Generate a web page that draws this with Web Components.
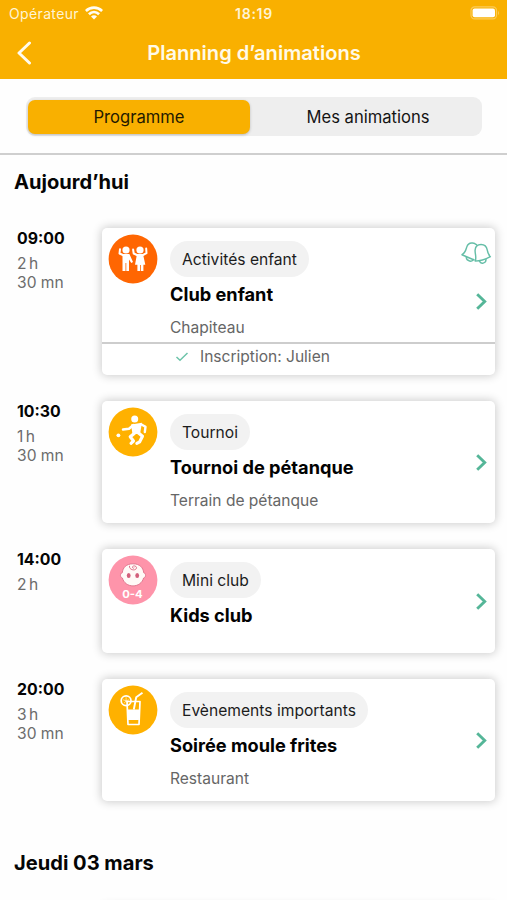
<!DOCTYPE html>
<html lang="fr">
<head>
<meta charset="utf-8">
<title>Planning d’animations</title>
<style>
html, body { margin: 0; height: 900px; overflow: hidden; background: #fefefe; }
body { font-family: Inter, "Liberation Sans", sans-serif; color: #050505; }
</style>
</head>
<body>
<planning-app></planning-app>

<script>
const define = (name, html) => customElements.define(name, class extends HTMLElement {
  constructor() {
    super();
    const t = document.createElement('template');
    t.innerHTML = html;
    this.attachShadow({ mode: 'open' }).append(t.content.cloneNode(true));
  }
});

define('status-bar', `
<style>
:host { display: grid; grid-template-columns: 1fr auto 1fr; align-items: center; height: 27px; padding: 0 7px 0 9px; color: #fff4d4; font-size: 14px; box-sizing: border-box; }
.op { display: flex; align-items: center; gap: 6px; letter-spacing: .36px; line-height: 27px; height: 27px; }
.time { font-weight: 600; letter-spacing: .75px; line-height: 27px; height: 27px; margin-right: 1px; }
.bat { justify-self: end; }
svg { display: block; margin-top: -1px; }
</style>
<div class="op"><span>Opérateur</span>
<svg width="18" height="14" viewBox="0 0 18 14" fill="none" stroke="#fffdf4" stroke-width="2.6"><path d="M.9 5C5.500.5 12.500.5 17.100 5"/><path d="M3.900 8.300c3-2.900 7.200-2.900 10.200 0"/><path d="M9 13.500 6 10.500c1.700-1.600 4.300-1.600 6 0z" fill="#fffdf4" stroke="none"/></svg></div>
<div class="time">18:19</div>
<svg class="bat" width="30" height="14" viewBox="0 0 30 14"><rect x="1" y=".9" width="25.500" height="12" rx="3.600" fill="none" stroke="#fbcb58" stroke-width="1.200"/><rect x="2.600" y="2.500" width="22.400" height="8.800" rx="2" fill="#fff"/><path d="M28 5c1.300.6 1.300 3.400 0 4z" fill="#fbcb58"/></svg>
`);

define('nav-bar', `
<style>
:host { display: grid; grid-template-columns: 1fr auto 1fr; align-items: center; height: 52px; padding: 0 16px 0 17px; color: #fffae8; }
h1 { margin: 0 0 1px; font-size: 20.100px; font-weight: 600; line-height: 24px; }
svg { display: block; margin-top: -1px; }
</style>
<svg width="15" height="24" viewBox="0 0 15 24" fill="none" stroke="#fffbee" stroke-width="3" stroke-linecap="round" stroke-linejoin="round"><path d="M12.500 2 2 12l10.500 10"/></svg>
<h1><slot></slot></h1>
`);

define('segment-control', `
<style>
:host { display: flex; height: 39px; padding: 2.500px 2px; border-radius: 9px; background: #eee; box-sizing: border-box; }
div { width: 222px; border-radius: 7px; display: grid; place-items: center; font-size: 16.600px; line-height: 34px; }
.on { background: #f9b000; box-shadow: 0 1px 3px rgba(0,0,0,.22); color: #241a00; }
.off { flex: 1; color: #141414; padding-left: 6px; }
</style>
<div class="on"><slot name="active"></slot></div><div class="off"><slot name="other"></slot></div>
`);

define('day-heading', `
<style>
:host { display: block; padding-left: 14px; height: 73px; font-size: 20.100px; font-weight: 700; line-height: 54px; box-sizing: border-box; }
</style><slot></slot>
`);

define('category-pill', `
<style>
:host { display: inline-block; height: 36.500px; padding: 0 12px; border-radius: 18.250px; background: #f2f2f2; font-size: 15.640px; line-height: 37px; color: #1c1c1c; white-space: nowrap; }
</style><slot></slot>
`);

const ICONS = {
  kids: ['#ff6602', `
    <g fill="#fff"><circle cx="17.500" cy="15.500" r="3.600"/><circle cx="31.500" cy="15.500" r="3.600"/>
    <path d="M14 19.500h6.900l3.600 8-1.700 1-2.300-3.600V36.500h-2.700V28.500h-.8v8H14z"/>
    <path d="M28.500 19.500h6l2.300 10.800h-1.900v6.200h-2.600V30.500h-.8v6h-2.600v-6.200h-2.400z"/></g>
    <g fill="none" stroke="#fff" stroke-width="2" stroke-linecap="round" stroke-linejoin="round"><path d="M15.500 21 11 19 11.500 14.700"/><path d="M29.500 21 25.200 19 24.600 15"/><path d="M33.500 21 38 18.700 37.700 14"/></g>`],
  ball: ['#ffb100', `
    <g fill="#fff"><circle cx="26.200" cy="11.500" r="3.500"/><circle cx="9.900" cy="27.800" r="1.900"/><path d="M22.500 17 33.500 15.200 31.500 26.500 24 26.500z"/></g>
    <g fill="none" stroke="#fff" stroke-linecap="round" stroke-linejoin="round"><path d="M25 17.500 20.500 21.300 14.500 22" stroke-width="2.500"/><path d="M32.500 16.700 37 19.300 36.300 24.500" stroke-width="2.400"/><path d="M26 25.700 21.700 29.300 25 33.500 22.500 35.800" stroke-width="3.100"/><path d="M29.700 25.300 34 28.800 31.200 34.300 28.300 35.800" stroke-width="3.100"/></g>`],
  baby: ['#fe94aa', `
    <path d="M24.500 8.300c6.800 0 10.200 3.900 10.700 8.900 2.500.7 2.500 4.600-.1 5.300-1.300 4.900-5.600 7.900-10.600 7.900s-9.300-3-10.600-7.900c-2.600-.7-2.600-4.600-.1-5.300.5-5 3.900-8.900 10.700-8.900z" fill="#fffaf7" stroke="#dd7089" stroke-width=".9"/>
    <g fill="#d2607b"><ellipse cx="20.200" cy="20" rx="1.900" ry="2.600"/><ellipse cx="28.700" cy="20" rx="1.900" ry="2.600"/></g>
    <path d="M21 10.300c-.8 4.500 6.800 5.500 7 2 0-2.600-4.500-2.400-4-.3.300 1 1.700.8 1.700.2" fill="none" stroke="#d96580" stroke-width=".9"/>
    <text x="24" y="42.800" text-anchor="middle" font-family="Inter, sans-serif" font-size="11" font-weight="700" textLength="20.500" lengthAdjust="spacingAndGlyphs" fill="#fff">0-4</text>`],
  drink: ['#ffb100', `
    <g fill="none" stroke="#fff" stroke-linejoin="round"><path d="M18.500 16H31.500l-1 23H19.500z" stroke-width="1.700" /><circle cx="17.600" cy="15.300" r="4.900" stroke-width="1.700"/><path d="M25.300 24 27.700 11.800 34 7.300" stroke-width="1.900"/></g>
    <path d="M19 24H31l-.6 10.500H19.600z" fill="#fff"/><path d="M17.600 15.300v-3.500M17.600 15.300l3-1M17.600 15.300l2 2.500M17.600 15.300l-2 2.500M17.600 15.300l-3-1" stroke="#fff" stroke-width=".6"/>`]
};

customElements.define('activity-icon', class extends HTMLElement {
  connectedCallback() {
    const [bg, art] = ICONS[this.getAttribute('name')];
    this.attachShadow({ mode: 'open' }).innerHTML = `
<style>:host { display: block; width: 49.500px; height: 49.500px; } svg { display: block; }</style>
<svg width="49.500" height="49.500" viewBox="-.5 -.5 49.500 49.500"><circle cx="24.500" cy="24.500" r="24.400" fill="${bg}"/>${art}</svg>`;
  }
});

customElements.define('event-card', class extends HTMLElement {
  connectedCallback() {
    const a = n => this.getAttribute(n);
    const style = `
<style>
:host { display: grid; grid-template-columns: 1fr 34px; grid-template-rows: minmax(0, 1fr) auto; border-radius: 5px; background: #fff; box-shadow: 0 0 10px 1px rgba(0,0,0,.2); box-sizing: border-box; }
.main { grid-column: 1; grid-row: 1; display: flex; gap: 12.500px; padding: 6px 0 0 6px; }
.text { padding-top: 6.500px; }
h3 { margin: 4.500px 0 0; font-size: 18.200px; font-weight: 700; line-height: 24px; color: #020202; }
p { margin: 12px 0 0; font-size: 15.550px; line-height: 20px; color: #666; }
.bells { grid-column: 2; grid-row: 1; margin: 13px 0 0; display: block; }
.go { grid-column: 2; grid-row: 1 / -1; align-self: center; margin: 1px 0 0 15px; display: block; }
footer { grid-column: 1 / -1; grid-row: 2; display: flex; align-items: center; height: 30.500px; border-top: 2px solid #cdcdcd; padding-left: 73px; gap: 11px; font-size: 15.560px; line-height: 24px; color: #666; }
footer span, footer svg { margin-top: -5px; }
</style>`;
    const body = a('name') ? `
<div class="main"><activity-icon name="${a('icon')}"></activity-icon>
<div class="text"><category-pill>${a('category')}</category-pill><h3>${a('name')}</h3>${a('place') ? `<p>${a('place')}</p>` : ''}</div></div>
${this.hasAttribute('reminder') ? `<svg class="bells" width="30.500" height="25" viewBox="0 0 32 26" fill="none" stroke="#65bea7" stroke-width="1.500" stroke-linejoin="round" stroke-linecap="round">
<path d="M13.800 19.800 1 14.300c3.500-2 4-4.500 5-8C7 3.200 9.500 1.700 12 2l1.500.2 2.700 1.500"/>
<path d="M15 21c1.500-4.500-.5-8-.2-11.500.3-4 3-6 6.200-6 4 0 6 2.600 6.500 5.800.5 3.300 1 4.700 3.300 7-4.800 2.600-10 4.700-15.800 4.700z"/>
<path d="M5.500 17c.3 4.700 6.500 5 7.300 2.200M19.500 21.200c1 3.300 7 2.400 6.700-2"/></svg>` : ''}
<svg class="go" width="11" height="17" viewBox="0 0 11 17" fill="none" stroke="#55b698" stroke-width="2.900"><path d="M1.200 1.300 8.700 8.500 1.200 15.700"/></svg>
${a('booking') ? `<footer><svg width="14" height="12" viewBox="0 0 14 12" fill="none" stroke="#6ec4aa" stroke-width="1.500"><path d="M1.500 6 5 9.300 12.500 2"/></svg><span>${a('booking')}</span></footer>` : ''}` : '';
    this.attachShadow({ mode: 'open' }).innerHTML = style + body;
  }
});

define('event-row', `
<style>
:host { display: grid; grid-template-columns: 85px 393px; padding-left: 17px; }
.when { display: flex; flex-direction: column; }
.start { font-size: 15.850px; font-weight: 700; line-height: 21px; margin-bottom: 5px; }
.dur { font-size: 15.600px; line-height: 19px; color: #6c6c6c; }
</style>
<div class="when"><div class="start"><slot name="start"></slot></div><div class="dur"><slot name="duration"></slot></div></div>
<slot></slot>
`);

define('planning-app', `
<style>
:host { display: flex; flex-direction: column; width: 507px; height: 900px; overflow: hidden; }
header { background: #f9b000; flex: none; height: 79px; }
.tabs { flex: none; height: 76px; padding: 18px 25px 0 26px; border-bottom: 2px solid #cfcfcf; box-sizing: border-box; }
.day { flex: none; }
.list { display: flex; flex-direction: column; gap: 26.500px; }
.day + .day { margin-top: 35px; }
.day + .day .list { margin-top: -2px; }
.h { word-spacing: -2px; }
</style>
<header><status-bar></status-bar><nav-bar>Planning d’animations</nav-bar></header>
<div class="tabs"><segment-control><span slot="active">Programme</span><span slot="other">Mes animations</span></segment-control></div>
<section class="day"><day-heading>Aujourd’hui</day-heading>
<div class="list">
<event-row><span slot="start">09:00</span><span slot="duration"><span class="h">2 h</span><br>30 mn</span><event-card style="height:146.500px" icon="kids" category="Activités enfant" name="Club enfant" place="Chapiteau" booking="Inscription: Julien" reminder></event-card></event-row>
<event-row><span slot="start">10:30</span><span slot="duration"><span class="h">1 h</span><br>30 mn</span><event-card style="height:121.500px" icon="ball" category="Tournoi" name="Tournoi de pétanque" place="Terrain de pétanque"></event-card></event-row>
<event-row><span slot="start">14:00</span><span slot="duration"><span class="h">2 h</span></span><event-card style="height:103.500px" icon="baby" category="Mini club" name="Kids club"></event-card></event-row>
<event-row><span slot="start">20:00</span><span slot="duration"><span class="h">3 h</span><br>30 mn</span><event-card style="height:121.500px" icon="drink" category="Evènements importants" name="Soirée moule frites" place="Restaurant"></event-card></event-row>
</div></section>
<section class="day"><day-heading>Jeudi 03 mars</day-heading>
<div class="list"><event-row><event-card style="height:121.500px"></event-card></event-row></div></section>
`);
</script>
</body>
</html>
